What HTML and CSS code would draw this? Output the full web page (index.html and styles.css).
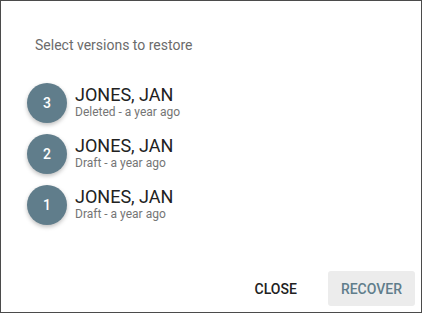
FILE: index.html
```html
<!doctype html>
<html>

<head>
    <title>Restore versions</title>
    <link rel="stylesheet" href="styles.css">
</head>

<body>
    <section class="dialog">
        <div class="dialog-title">Select versions to restore</div>
        <ul class="versions">
            <li class="version">
                <span class="badge">3</span>
                <div class="version-text">
                    <div class="version-name">JONES, JAN</div>
                    <div class="version-meta">Deleted - a year ago</div>
                </div>
            </li>
            <li class="version">
                <span class="badge">2</span>
                <div class="version-text">
                    <div class="version-name">JONES, JAN</div>
                    <div class="version-meta">Draft - a year ago</div>
                </div>
            </li>
            <li class="version">
                <span class="badge">1</span>
                <div class="version-text">
                    <div class="version-name">JONES, JAN</div>
                    <div class="version-meta">Draft - a year ago</div>
                </div>
            </li>
        </ul>
        <div class="actions">
            <a class="btn">Close</a>
            <a class="btn btn-disabled">Recover</a>
        </div>
    </section>
</body>

</html>
```

FILE: styles.css
```css
body,
html {
    width: 100%;
    height: 100%;
    padding: 0;
    margin: 0;
    background: #fff;
}

* {
    font-family: Roboto, "Liberation Sans", Arial, sans-serif;
    box-sizing: border-box;
}

.dialog {
    height: 313px;
    border: 1px solid #4b4b4b;
    display: flex;
    flex-direction: column;
}

.dialog-title {
    padding: 34px 0 0 34px;
    font-size: 14px;
    line-height: 20px;
    color: #6b6b6b;
}

.versions {
    list-style: none;
    margin: 28px 0 0;
    padding: 0 0 0 26px;
}

.version {
    display: flex;
    align-items: flex-start;
    height: 40px;
    margin-bottom: 11px;
}

.badge {
    width: 40px;
    height: 40px;
    border-radius: 50%;
    background: #607d8b;
    color: #fff;
    font-size: 14px;
    font-weight: 500;
    display: flex;
    justify-content: center;
    align-items: center;
    box-shadow: 0 2px 4px rgba(0, 0, 0, 0.25);
}

.version-text {
    margin-left: 8px;
    padding-top: 2px;
}

.version-name {
    font-size: 18px;
    line-height: 20px;
    color: #212121;
}

.version-meta {
    font-size: 12px;
    line-height: 14px;
    color: #757575;
}

.actions {
    margin-top: auto;
    display: flex;
    justify-content: flex-end;
    align-items: center;
    padding: 0 6px 6px 0;
}

.btn {
    height: 35px;
    padding: 0 13px;
    border-radius: 3px;
    display: flex;
    align-items: center;
    font-size: 14px;
    font-weight: 500;
    text-transform: uppercase;
    color: #212121;
    cursor: pointer;
}

.btn + .btn {
    margin-left: 18px;
}

.btn-disabled {
    background: #ececec;
    color: #607d8b;
}
```
